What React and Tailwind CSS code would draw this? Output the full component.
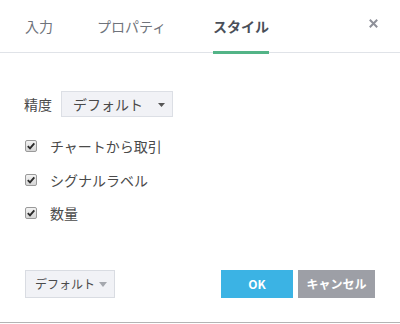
import React from "react";

const font = { fontFamily: '"Noto Sans CJK JP", "Noto Sans", sans-serif' };

function Check() {
  return (
    <svg width="12" height="12" viewBox="0 0 12 12" className="shrink-0">
      <defs>
        <linearGradient id="cbg" x1="0" y1="0" x2="0" y2="1">
          <stop offset="0" stopColor="#f4f4f4" />
          <stop offset="1" stopColor="#d4d4d4" />
        </linearGradient>
      </defs>
      <rect x="0.5" y="0.5" width="11" height="11" rx="1.5" fill="url(#cbg)" stroke="#9a9a9a" />
      <path d="M2.8 6.2 L5 8.4 L9.3 3.4" fill="none" stroke="#2b2b2b" strokeWidth="1.9" />
    </svg>
  );
}

function Row({ label, className }) {
  return (
    <div className={"flex h-[24px] items-center " + className}>
      <div className="ml-[1px] flex w-[25px] items-center">
        <Check />
      </div>
      <span className="text-[14px] leading-none text-[#4a4a4a]">{label}</span>
    </div>
  );
}

export default function App() {
  return (
    <div
      className="flex h-[323px] w-[400px] flex-col border-b border-[#b4b4b4] bg-white"
      style={font}
    >
      <div className="flex h-[53px] shrink-0 items-start border-b border-[#e0e3e8]">
        <div className="ml-[25px] flex h-[54px] w-[28px] items-center pb-[3px] text-[14px] leading-none text-[#6f737b]">
          入力
        </div>
        <div className="ml-[44px] flex h-[54px] w-[70px] items-center pb-[3px] text-[14px] leading-none text-[#6f737b]">
          プロパティ
        </div>
        <div className="ml-[46px] flex h-[54px] w-[56px] items-center justify-center border-b-[3px] border-[#53b487] text-[14px] font-bold leading-none text-[#4a4f59]">
          スタイル
        </div>
        <div className="ml-auto mr-[22px] flex h-[46px] items-center">
          <svg width="9" height="9" viewBox="0 0 9 9">
            <path d="M0.8 0.8 L8.2 8.2 M8.2 0.8 L0.8 8.2" stroke="#8e9099" strokeWidth="2" />
          </svg>
        </div>
      </div>

      <div className="flex flex-col pl-[24px]">
        <div className="mt-[38px] flex items-center">
          <span className="w-[37px] text-[14px] leading-none text-[#4a4a4a]">精度</span>
          <div className="flex h-[26px] w-[112px] items-center border border-[#dcdfe5] bg-[#f1f2f6] pl-[11px]">
            <span className="text-[14px] leading-none text-[#4a4a4a]">デフォルト</span>
            <svg width="7" height="4" viewBox="0 0 7 4" className="ml-auto mr-[7px] mt-[2px]">
              <path d="M0 0 H7 L3.5 4 Z" fill="#555" />
            </svg>
          </div>
        </div>
        <Row label="チャートから取引" className="mt-[17px]" />
        <Row label="シグナルラベル" className="mt-[10px]" />
        <Row label="数量" className="mt-[9px]" />
      </div>

      <div className="mt-auto flex items-center px-[25px] pb-[24px]">
        <div className="flex h-[28px] w-[90px] items-center border border-[#d9dce2] bg-[#f1f2f6] pl-[9px]">
          <span className="text-[12px] leading-none text-[#4a4a4a]">デフォルト</span>
          <svg width="8" height="5" viewBox="0 0 8 5" className="ml-[4px]">
            <path d="M0 0 H8 L4 5 Z" fill="#a5a8ae" />
          </svg>
        </div>
        <div className="ml-auto flex h-[28px] w-[72px] items-center justify-center bg-[#3bb3e4] text-[12px] font-bold leading-none text-white">
          OK
        </div>
        <div className="ml-[5px] flex h-[28px] w-[77px] items-center justify-center bg-[#9d9fa6] text-[12px] font-bold leading-none text-white">
          キャンセル
        </div>
      </div>
    </div>
  );
}
